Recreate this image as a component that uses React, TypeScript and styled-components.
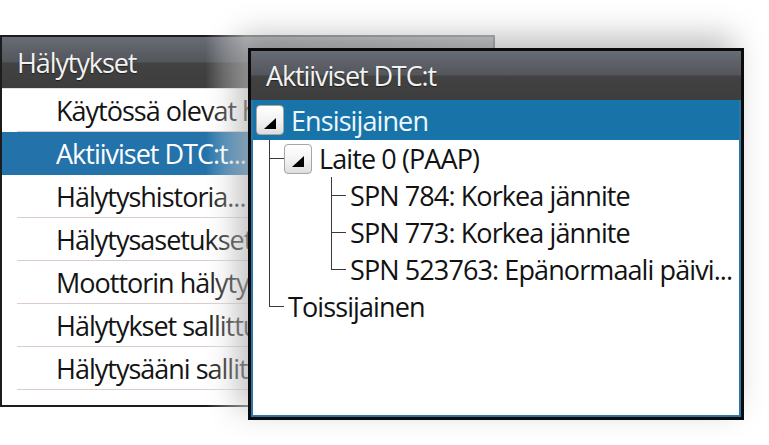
import styled, { createGlobalStyle } from "styled-components";

const GlobalStyle = createGlobalStyle`
  html, body {
    margin: 0;
    padding: 0;
    background: #fff;
  }
`;

const Stage = styled.div`
  position: relative;
  width: 769px;
  height: 445px;
  overflow: hidden;
  background: #fff;
  font-family: "Open Sans", "DejaVu Sans", sans-serif;
  font-weight: 500;
  padding-top: 35px;
  box-sizing: border-box;
`;

const Window = styled.div`
  display: flex;
  flex-direction: column;
  box-sizing: border-box;
  background: #fff;
`;

const BackWindow = styled(Window)`
  position: relative;
  width: 495px;
  height: 372px;
  border: 2px solid #1c1c1c;

  /* the panel behind fades out towards the front dialog */
  &::after {
    content: "";
    position: absolute;
    inset: -2px;
    pointer-events: none;
    background: linear-gradient(
      to right,
      rgba(255, 255, 255, 0) 0,
      rgba(255, 255, 255, 0) 205px,
      rgba(255, 255, 255, 0.55) 246px,
      rgba(255, 255, 255, 0.66) 100%
    );
  }
`;

const FrontWindow = styled(Window)`
  position: absolute;
  left: 248px;
  top: 48px;
  width: 496px;
  height: 372px;
  border: 3px solid #0b0b0b;
  box-shadow: -10px -12px 30px rgba(0, 0, 0, 0.26);
`;

const Header = styled.div<{ $h: number }>`
  flex: none;
  height: ${(p) => p.$h}px;
  display: flex;
  align-items: center;
  padding-left: 15px;
  background: linear-gradient(
    to bottom,
    #686c74 0%,
    #53565b 48%,
    #424242 52%,
    #3d3d3d 100%
  );
  color: #f2f2f2;
  font-size: 27px;
  letter-spacing: -1.1px;
  text-shadow: 0 1px 1px rgba(0, 0, 0, 0.5);
  white-space: nowrap;
`;

const MenuList = styled.div`
  display: flex;
  flex-direction: column;
  border-top: 1px solid #e6dede;
`;

const MenuItem = styled.div<{ $selected?: boolean }>`
  position: relative;
  height: 43px;
  display: flex;
  align-items: center;
  padding-left: 54px;
  font-size: 27px;
  letter-spacing: -1px;
  white-space: nowrap;
  overflow: hidden;
  color: ${(p) => (p.$selected ? "#ffffff" : "#141414")};
  background: ${(p) => (p.$selected ? "#2372a9" : "transparent")};

  &::after {
    content: "";
    position: absolute;
    left: 15px;
    right: 0;
    bottom: 0;
    height: 1px;
    background: ${(p) => (p.$selected ? "transparent" : "#dccccc")};
  }
`;

const TreeBody = styled.div`
  flex: 1;
  border: 2px solid #2b78a8;
  border-top: none;
  background: #fff;
  overflow: hidden;
`;

const Row = styled.div<{ $selected?: boolean; $h: number; $pad: number }>`
  height: ${(p) => p.$h}px;
  display: flex;
  align-items: center;
  gap: 7px;
  padding-left: ${(p) => p.$pad}px;
  font-size: 27px;
  letter-spacing: -0.9px;
  white-space: nowrap;
  color: ${(p) => (p.$selected ? "#eef7ff" : "#121212")};
  background: ${(p) => (p.$selected ? "#1773a8" : "transparent")};
`;

const Expander = styled.span`
  flex: none;
  width: 28px;
  height: 30px;
  box-sizing: border-box;
  border: 1px solid #a6a6a6;
  border-radius: 4px;
  background: linear-gradient(to bottom, #ffffff 0%, #f2f2f2 55%, #dedede 100%);
  display: flex;
  align-items: center;
  justify-content: center;
  padding-top: 6px;
  position: relative;
  z-index: 1;
`;

const Children = styled.div<{ $indent: number }>`
  margin-left: ${(p) => p.$indent}px;
`;

const Node = styled.div`
  position: relative;

  /* branch: vertical stub + horizontal tick to this node */
  &::before {
    content: "";
    position: absolute;
    left: 0;
    top: 0;
    width: 14px;
    height: 18px;
    border-left: 1px solid #3a3a3a;
    border-bottom: 1px solid #3a3a3a;
  }

  /* continue the trunk past non-last siblings */
  &:not(:last-child)::after {
    content: "";
    position: absolute;
    left: 0;
    top: 0;
    bottom: 0;
    border-left: 1px solid #3a3a3a;
  }
`;

const Triangle = () => (
  <svg width="12" height="11" viewBox="0 0 12 11">
    <polygon points="12,0 12,11 0,11" fill="#000" />
  </svg>
);

const menu = [
  "Käytössä olevat hälytykset",
  "Aktiiviset DTC:t...",
  "Hälytyshistoria...",
  "Hälytysasetukset...",
  "Moottorin hälytykset...",
  "Hälytykset sallittu",
  "Hälytysääni sallittu",
];

const spn = [
  "SPN 784: Korkea jännite",
  "SPN 773: Korkea jännite",
  "SPN 523763: Epänormaali päivi...",
];

export default function App() {
  return (
    <Stage>
      <GlobalStyle />
      <BackWindow>
        <Header $h={51}>Hälytykset</Header>
        <MenuList>
          {menu.map((m, i) => (
            <MenuItem key={m} $selected={i === 1}>
              {m}
            </MenuItem>
          ))}
        </MenuList>
      </BackWindow>

      <FrontWindow>
        <Header $h={49}>Aktiiviset DTC:t</Header>
        <TreeBody>
          <Row $selected $h={40} $pad={3}>
            <Expander>
              <Triangle />
            </Expander>
            Ensisijainen
          </Row>
          <Children $indent={16}>
            <Node>
              <Row $h={37} $pad={15}>
                <Expander>
                  <Triangle />
                </Expander>
                Laite 0 (PAAP)
              </Row>
              <Children $indent={62}>
                {spn.map((s) => (
                  <Node key={s}>
                    <Row $h={37} $pad={19}>
                      {s}
                    </Row>
                  </Node>
                ))}
              </Children>
            </Node>
            <Node>
              <Row $h={37} $pad={19}>
                Toissijainen
              </Row>
            </Node>
          </Children>
        </TreeBody>
      </FrontWindow>
    </Stage>
  );
}
